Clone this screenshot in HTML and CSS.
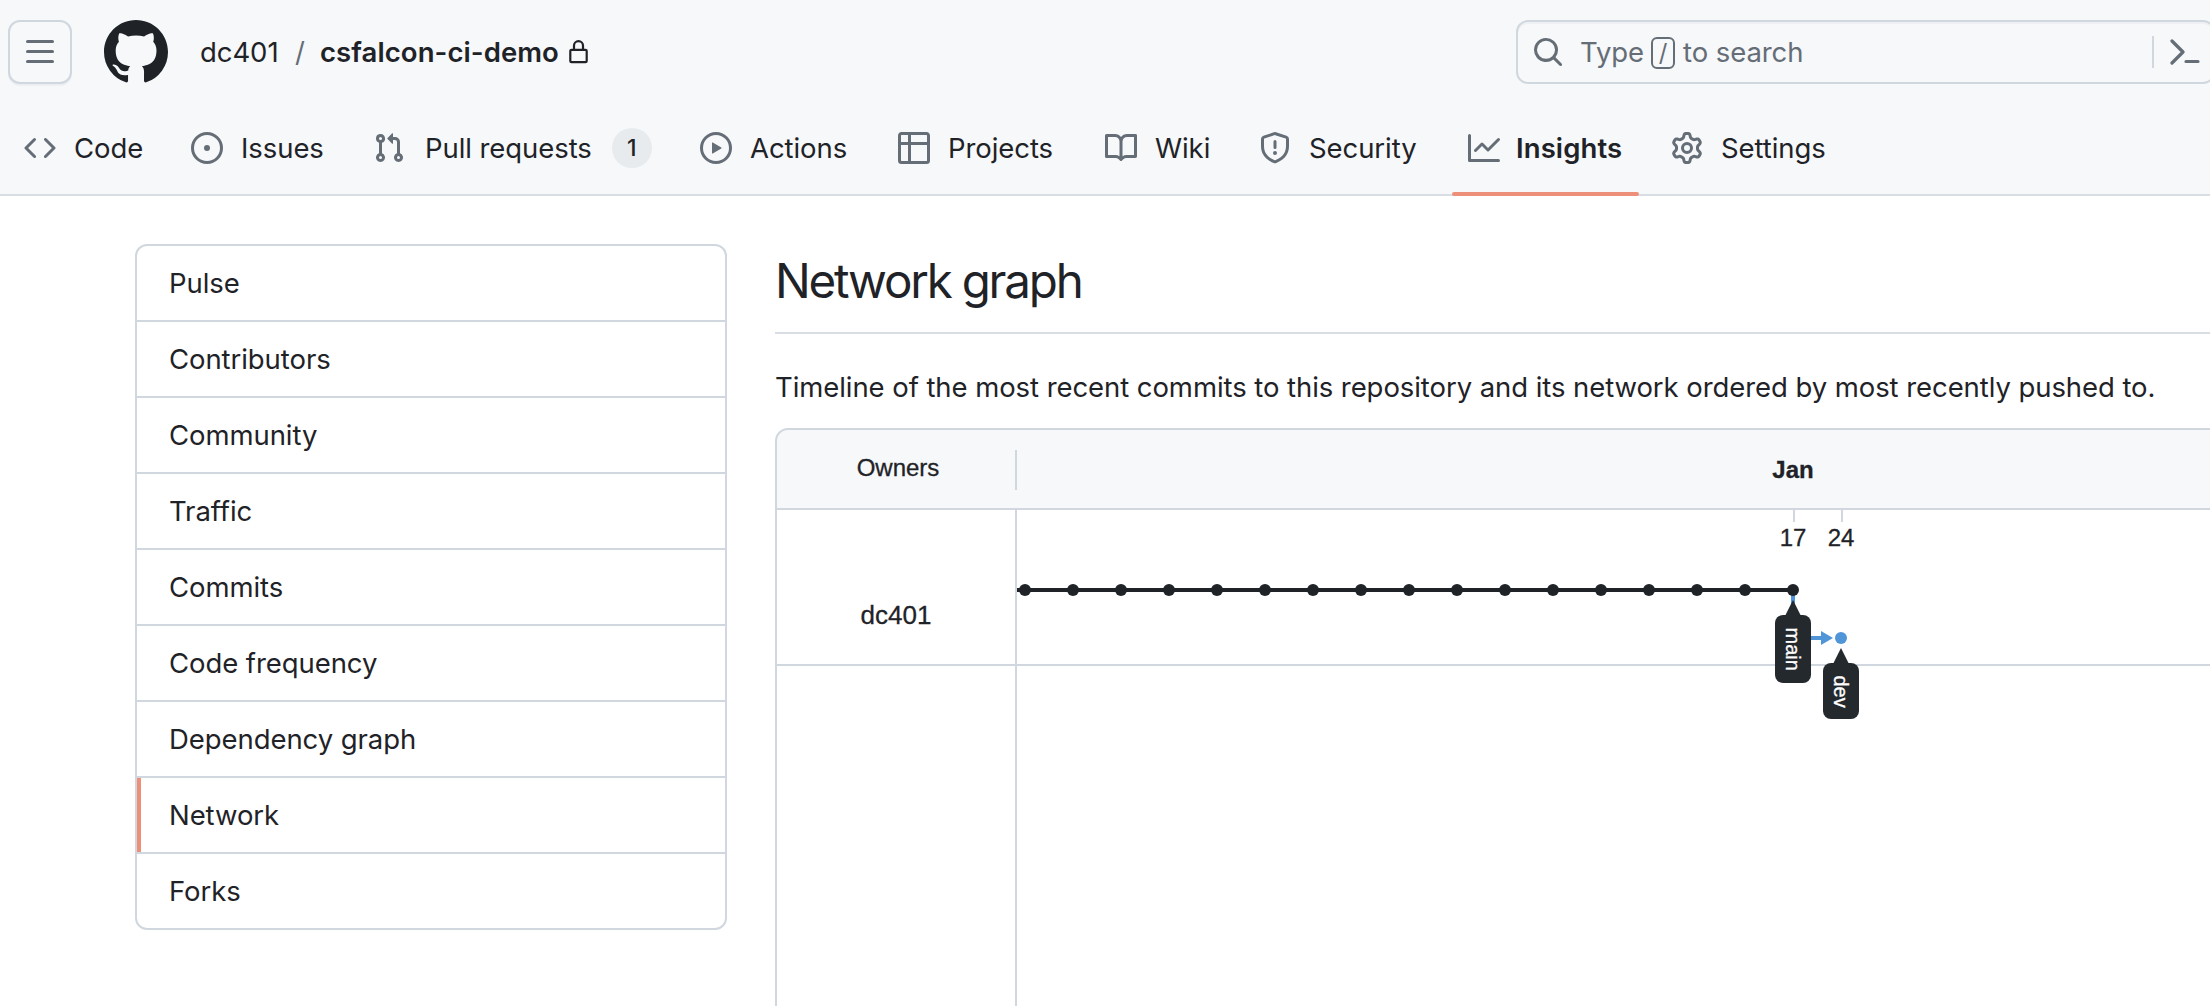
FILE: index.html
```
<!DOCTYPE html>
<html lang="en">
<head>
<meta charset="utf-8">
<title>Network graph · dc401/csfalcon-ci-demo</title>
<link rel="stylesheet" href="styles.css">
</head>
<body>
<header class="header">
  <div class="topbar">
    <button class="menu-button" aria-label="Menu"><svg class="icon" viewBox="0 0 16 16"><path d="M1 2.75A.75.75 0 0 1 1.75 2h12.5a.75.75 0 0 1 0 1.5H1.75A.75.75 0 0 1 1 2.75Zm0 5A.75.75 0 0 1 1.75 7h12.5a.75.75 0 0 1 0 1.5H1.75A.75.75 0 0 1 1 7.75ZM1.75 12h12.5a.75.75 0 0 1 0 1.5H1.75a.75.75 0 0 1 0-1.5Z"/></svg></button>
    <svg class="logo" viewBox="0 0 16 16"><path d="M8 0c4.42 0 8 3.58 8 8a8.013 8.013 0 0 1-5.45 7.59c-.4.08-.55-.17-.55-.38 0-.27.01-1.13.01-2.2 0-.75-.25-1.23-.54-1.48 1.78-.2 3.65-.88 3.65-3.95 0-.88-.31-1.59-.82-2.15.08-.2.36-1.02-.08-2.12 0 0-.67-.22-2.2.82-.64-.18-1.32-.27-2-.27-.68 0-1.36.09-2 .27-1.53-1.03-2.2-.82-2.2-.82-.44 1.1-.16 1.92-.08 2.12-.51.56-.82 1.28-.82 2.15 0 3.06 1.86 3.75 3.64 3.95-.23.2-.44.55-.51 1.07-.46.21-1.61.55-2.33-.66-.15-.24-.6-.83-1.23-.82-.67.01-.27.38.01.53.34.19.73.9.82 1.13.16.45.68 1.31 2.69.94 0 .67.01 1.3.01 1.49 0 .21-.15.45-.55.38A7.995 7.995 0 0 1 0 8c0-4.42 3.58-8 8-8Z"/></svg>
    <div class="crumbs">
      <span class="crumb-owner">dc401</span>
      <span class="crumb-slash">/</span>
      <span class="crumb-repo">csfalcon-ci-demo</span>
      <svg class="lock" viewBox="0 0 20 24"><rect x="1.3" y="9.8" width="16.4" height="12.4" rx="1.2"/><path d="M5 9.8V5.6a4.5 4.5 0 0 1 9 0v4.2"/></svg>
    </div>
    <div class="search">
      <svg class="icon" viewBox="0 0 16 16"><path d="M10.68 11.74a6 6 0 0 1-7.922-8.982 6 6 0 0 1 8.982 7.922l3.04 3.04a.749.749 0 0 1-.326 1.275.749.749 0 0 1-.734-.215ZM11.5 7a4.499 4.499 0 1 0-8.997 0A4.499 4.499 0 0 0 11.5 7Z"/></svg>
      <span class="search-type">Type</span><kbd class="search-key">/</kbd><span class="search-hint">to search</span>
      <span class="search-divider"></span>
      <svg class="terminal" viewBox="0 0 30 32"><path d="M2 5l11 11L2 27M16 25.500h12"/></svg>
    </div>
  </div>
  <nav class="tabs">
    <a class="tab"><svg class="icon" viewBox="0 0 16 16"><path d="m11.28 3.22 4.25 4.25a.75.75 0 0 1 0 1.06l-4.25 4.25a.749.749 0 0 1-1.275-.326.749.749 0 0 1 .215-.734L13.940 8l-3.720-3.720a.749.749 0 0 1 .326-1.275.749.749 0 0 1 .734.215Zm-6.560 0a.751.751 0 0 1 1.042.018.751.751 0 0 1 .018 1.042L2.060 8l3.720 3.720a.749.749 0 0 1-.326 1.275.749.749 0 0 1-.734-.215L.470 8.530a.750.750 0 0 1 0-1.060Z"/></svg><span>Code</span></a>
    <a class="tab"><svg class="icon" viewBox="0 0 16 16"><path d="M8 9.500a1.500 1.500 0 1 0 0-3 1.500 1.500 0 0 0 0 3Z"/><path d="M8 0a8 8 0 1 1 0 16A8 8 0 0 1 8 0ZM1.500 8a6.500 6.500 0 1 0 13 0 6.500 6.500 0 0 0-13 0Z"/></svg><span>Issues</span></a>
    <a class="tab tab-pulls"><svg class="icon" viewBox="0 0 16 16"><path d="M1.500 3.250a2.250 2.250 0 1 1 3 2.122v5.256a2.251 2.251 0 1 1-1.500 0V5.372A2.250 2.250 0 0 1 1.500 3.250Zm5.677-.177L9.573.677A.250.250 0 0 1 10 .854V2.500h1A2.500 2.500 0 0 1 13.500 5v5.628a2.251 2.251 0 1 1-1.500 0V5a1 1 0 0 0-1-1h-1v1.646a.250.250 0 0 1-.427.177L7.177 3.427a.250.250 0 0 1 0-.354ZM3.750 2.500a.750.750 0 1 0 0 1.500.750.750 0 0 0 0-1.500Zm0 9.500a.750.750 0 1 0 0 1.500.750.750 0 0 0 0-1.500Zm8.250.750a.750.750 0 1 0 1.500 0 .750.750 0 0 0-1.500 0Z"/></svg><span>Pull requests</span><span class="counter">1</span></a>
    <a class="tab"><svg class="icon" viewBox="0 0 16 16"><path d="M8 0a8 8 0 1 1 0 16A8 8 0 0 1 8 0ZM1.500 8a6.500 6.500 0 1 0 13 0 6.500 6.500 0 0 0-13 0Zm4.879-2.773 4.264 2.559a.250.250 0 0 1 0 .428l-4.264 2.559A.250.250 0 0 1 6 10.559V5.442a.250.250 0 0 1 .379-.215Z"/></svg><span>Actions</span></a>
    <a class="tab"><svg class="icon" viewBox="0 0 16 16"><path d="M0 1.750C0 .784.784 0 1.750 0h12.500C15.216 0 16 .784 16 1.750v12.500A1.750 1.750 0 0 1 14.250 16H1.750A1.750 1.750 0 0 1 0 14.250ZM6.500 6.500v8h7.750a.250.250 0 0 0 .250-.250V6.500Zm8-1.500V1.750a.250.250 0 0 0-.250-.250H6.500V5Zm-13 1.500v7.750c0 .138.112.250.250.250H5v-8ZM5 5V1.500H1.750a.250.250 0 0 0-.250.250V5Z"/></svg><span>Projects</span></a>
    <a class="tab"><svg class="icon" viewBox="0 0 16 16"><path d="M0 1.750A.750.750 0 0 1 .750 1h4.253c1.227 0 2.317.590 3 1.501A3.743 3.743 0 0 1 11.006 1h4.245a.750.750 0 0 1 .750.750v10.500a.750.750 0 0 1-.750.750h-4.507a2.250 2.250 0 0 0-1.591.659l-.622.621a.750.750 0 0 1-1.060 0l-.622-.621A2.250 2.250 0 0 0 5.258 13H.750a.750.750 0 0 1-.750-.750Zm7.251 10.324.004-5.073-.002-2.253A2.250 2.250 0 0 0 5.003 2.500H1.500v9h3.757a3.750 3.750 0 0 1 1.994.574ZM8.755 4.750l-.004 7.322a3.752 3.752 0 0 1 1.992-.572H14.500v-9h-3.495a2.250 2.250 0 0 0-2.250 2.250Z"/></svg><span>Wiki</span></a>
    <a class="tab"><svg class="icon" viewBox="0 0 16 16"><path d="M7.467.133a1.748 1.748 0 0 1 1.066 0l5.250 1.680A1.750 1.750 0 0 1 15 3.480V7c0 1.566-.320 3.182-1.303 4.682-.983 1.498-2.585 2.813-5.032 3.855a1.697 1.697 0 0 1-1.330 0c-2.447-1.042-4.049-2.357-5.032-3.855C1.320 10.182 1 8.566 1 7V3.480a1.755 1.755 0 0 1 1.217-1.667Zm.610 1.429a.250.250 0 0 0-.153 0l-5.250 1.680a.250.250 0 0 0-.174.238V7c0 1.358.275 2.666 1.057 3.860.784 1.194 2.121 2.340 4.366 3.297a.196.196 0 0 0 .154 0c2.245-.956 3.582-2.104 4.366-3.298C13.225 9.666 13.500 8.360 13.500 7V3.480a.251.251 0 0 0-.174-.237l-5.250-1.680ZM8.750 4.750v3a.750.750 0 0 1-1.500 0v-3a.750.750 0 0 1 1.500 0ZM9 10.500a1 1 0 1 1-2 0 1 1 0 0 1 2 0Z"/></svg><span>Security</span></a>
    <a class="tab tab-current"><svg class="icon" viewBox="0 0 16 16"><path d="M1.500 1.750V13.500h13.750a.750.750 0 0 1 0 1.500H.750a.750.750 0 0 1-.750-.750V1.750a.750.750 0 0 1 1.500 0Zm14.280 2.530-5.250 5.250a.750.750 0 0 1-1.060 0L7 7.060 4.280 9.780a.751.751 0 0 1-1.042-.018.751.751 0 0 1-.018-1.042l3.250-3.250a.750.750 0 0 1 1.060 0L10 7.940l4.720-4.720a.751.751 0 0 1 1.042.018.751.751 0 0 1 .018 1.042Z"/></svg><span>Insights</span></a>
    <a class="tab"><svg class="icon" viewBox="0 0 16 16"><path d="M8 0a8.200 8.200 0 0 1 .701.031C9.444.095 9.990.645 10.160 1.290l.288 1.107c.018.066.079.158.212.224.231.114.454.243.668.386.123.082.233.090.299.071l1.103-.303c.644-.176 1.392.021 1.820.630.270.385.506.792.704 1.218.315.675.111 1.422-.364 1.891l-.814.806c-.049.048-.098.147-.088.294.016.257.016.515 0 .772-.010.147.038.246.088.294l.814.806c.475.469.679 1.216.364 1.891a7.977 7.977 0 0 1-.704 1.217c-.428.610-1.176.807-1.820.630l-1.102-.302c-.067-.019-.177-.011-.300.071a5.909 5.909 0 0 1-.668.386c-.133.066-.194.158-.211.224l-.290 1.106c-.168.646-.715 1.196-1.458 1.260a8.006 8.006 0 0 1-1.402 0c-.743-.064-1.289-.614-1.458-1.260l-.289-1.106c-.018-.066-.079-.158-.212-.224a5.738 5.738 0 0 1-.668-.386c-.123-.082-.233-.090-.299-.071l-1.103.303c-.644.176-1.392-.021-1.820-.630a8.120 8.120 0 0 1-.704-1.218c-.315-.675-.111-1.422.363-1.891l.815-.806c.050-.048.098-.147.088-.294a6.214 6.214 0 0 1 0-.772c.010-.147-.038-.246-.088-.294l-.815-.806C.635 6.045.431 5.298.746 4.623a7.920 7.920 0 0 1 .704-1.217c.428-.610 1.176-.807 1.820-.630l1.102.302c.067.019.177.011.300-.071.214-.143.437-.272.668-.386.133-.066.194-.158.211-.224l.290-1.106C6.009.645 6.556.095 7.299.030 7.530.010 7.764 0 8 0Zm-.571 1.525c-.036.003-.108.036-.137.146l-.289 1.105c-.147.561-.549.967-.998 1.189-.173.086-.340.183-.500.290-.417.278-.970.423-1.529.270l-1.103-.303c-.109-.030-.175.016-.195.045-.220.312-.412.644-.573.990-.014.031-.021.110.059.190l.815.806c.411.406.562.957.530 1.456a4.709 4.709 0 0 0 0 .582c.032.499-.119 1.050-.530 1.456l-.815.806c-.081.080-.073.159-.059.190.162.346.353.677.573.989.020.030.085.076.195.046l1.102-.303c.560-.153 1.113-.008 1.530.270.161.107.328.204.501.290.447.222.850.629.997 1.189l.289 1.105c.029.109.101.143.137.146a6.600 6.600 0 0 0 1.142 0c.036-.003.108-.036.137-.146l.289-1.105c.147-.561.549-.967.998-1.189.173-.086.340-.183.500-.290.417-.278.970-.423 1.529-.270l1.103.303c.109.029.175-.016.195-.045.220-.313.411-.644.573-.990.014-.031.021-.110-.059-.190l-.815-.806c-.411-.406-.562-.957-.530-1.456a4.709 4.709 0 0 0 0-.582c-.032-.499.119-1.050.530-1.456l.815-.806c.081-.080.073-.159.059-.190a6.464 6.464 0 0 0-.573-.989c-.020-.030-.085-.076-.195-.046l-1.102.303c-.560.153-1.113.008-1.530-.270a4.440 4.440 0 0 0-.501-.290c-.447-.222-.850-.629-.997-1.189l-.289-1.105c-.029-.110-.101-.143-.137-.146a6.600 6.600 0 0 0-1.142 0ZM11 8a3 3 0 1 1-6 0 3 3 0 0 1 6 0ZM9.500 8a1.500 1.500 0 1 0-3.001.001A1.500 1.500 0 0 0 9.500 8Z"/></svg><span>Settings</span></a>
  </nav>
</header>
<div class="layout">
  <nav class="side-menu">
    <a class="side-item">Pulse</a>
    <a class="side-item">Contributors</a>
    <a class="side-item">Community</a>
    <a class="side-item">Traffic</a>
    <a class="side-item">Commits</a>
    <a class="side-item">Code frequency</a>
    <a class="side-item">Dependency graph</a>
    <a class="side-item side-item-current">Network</a>
    <a class="side-item">Forks</a>
  </nav>
  <main class="main">
    <h1 class="title">Network graph</h1>
    <p class="description">Timeline of the most recent commits to this repository and its network ordered by most recently pushed to.</p>
    <svg class="graph" width="1435" height="578" viewBox="775 428 1435 578">
      <path class="graph-head" d="M2220 429H788a12 12 0 0 0-12 12V509H2220Z"/>
      <path class="graph-rule" d="M776 500V1010M776 509H2220M776 665H2220M1016 450V490M1016 510V1010M1794 510V522M1842 510V522"/>
      <text class="graph-text" x="898" y="476" text-anchor="middle">Owners</text>
      <text class="graph-text graph-month" x="1793" y="478" text-anchor="middle">Jan</text>
      <text class="graph-text" x="1793" y="546" text-anchor="middle">17</text>
      <text class="graph-text" x="1841" y="546" text-anchor="middle">24</text>
      <text class="graph-text graph-owner" x="896" y="624" text-anchor="middle">dc401</text>
      <path class="branch-dev" d="M1793 590V638H1823"/>
      <path class="dev-fill" d="M1821 631l12 7-12 7Z"/>
      <circle class="dev-fill" cx="1841" cy="638" r="6"/>
      <path class="branch-main" d="M1017 590H1793"/>
      <g class="commits">
        <circle cx="1025" cy="590" r="6"/><circle cx="1073" cy="590" r="6"/><circle cx="1121" cy="590" r="6"/><circle cx="1169" cy="590" r="6"/><circle cx="1217" cy="590" r="6"/><circle cx="1265" cy="590" r="6"/><circle cx="1313" cy="590" r="6"/><circle cx="1361" cy="590" r="6"/><circle cx="1409" cy="590" r="6"/><circle cx="1457" cy="590" r="6"/><circle cx="1505" cy="590" r="6"/><circle cx="1553" cy="590" r="6"/><circle cx="1601" cy="590" r="6"/><circle cx="1649" cy="590" r="6"/><circle cx="1697" cy="590" r="6"/><circle cx="1745" cy="590" r="6"/><circle cx="1793" cy="590" r="6"/>
      </g>
      <g class="branch-tag">
        <rect x="1775" y="615" width="36" height="68" rx="8"/><path d="M1793 600l8 16h-16Z"/>
        <text transform="translate(1786 627.500) rotate(90)">main</text>
        <rect x="1823" y="663" width="36" height="56" rx="8"/><path d="M1841 648l8 16h-16Z"/>
        <text transform="translate(1834 675.500) rotate(90)">dev</text>
      </g>
    </svg>
  </main>
</div>
</body>
</html>
```
FILE: styles.css
```
* { box-sizing: border-box; }
body {
  margin: 0;
  height: 1006px;
  overflow: hidden;
  background: #fff;
  color: #1f2328;
  font-family: Inter, "Liberation Sans", sans-serif;
  font-size: 27.500px;
  letter-spacing: -.070px;
  line-height: 42px;
}
.icon { display: block; flex: none; width: 32px; height: 32px; fill: #656d76; }

.header {
  height: 196px;
  background: #f6f8fa;
  border-bottom: 2px solid #d8dee4;
}
.topbar { display: flex; align-items: center; height: 104px; padding-left: 8px; }
.menu-button {
  display: grid;
  flex: none;
  place-items: center;
  width: 64px;
  height: 64px;
  padding: 0;
  background: #f6f8fa;
  border: 2px solid #d0d7de;
  border-radius: 12px;
  box-shadow: 0 2px 0 rgba(31, 35, 40, .04);
}
.logo { flex: none; width: 64px; height: 64px; margin-left: 32px; fill: #1f2328; }
.crumbs { display: flex; flex: none; align-items: center; width: 1348px; padding-left: 32px; }
.crumb-owner { width: 95px; }
.crumb-slash { width: 25px; color: #656d76; }
.crumb-repo { width: 249px; font-weight: 600; letter-spacing: .080px; white-space: nowrap; }
.lock { width: 20px; height: 24px; fill: none; stroke: #1f2328; stroke-width: 2.200; }

.search {
  display: flex;
  flex: none;
  align-items: center;
  width: 699px;
  height: 64px;
  padding-left: 14px;
  border: 2px solid #d0d7de;
  border-radius: 12px;
  box-shadow: inset 0 2px 0 rgba(208, 215, 222, .2);
  color: #656d76;
}
.search-type { width: 70px; margin-left: 16px; }
.search-key {
  display: grid;
  place-items: center;
  width: 24px;
  height: 32px;
  margin: 2px 8px 0 1px;
  border: 2px solid #656d76;
  border-radius: 6px;
  font: 24px/24px Inter, sans-serif;
}
.search-divider { width: 2px; height: 32px; margin: 0 16px 0 auto; background: #d0d7de; }
.terminal { width: 30px; height: 32px; margin-right: 13px; fill: none; stroke: #656d76; stroke-width: 3.200; stroke-linecap: round; stroke-linejoin: round; }

.tabs {
  display: grid;
  grid-template-columns: 167px 181px 328px 198px 207px 154px 209px 203px 190px;
  height: 92px;
  padding-left: 8px;
}
.tab {
  position: relative;
  display: flex;
  align-items: center;
  gap: 18px;
  height: 88px;
  padding-left: 16px;
  white-space: nowrap;
}
.tab-pulls { gap: 20px; padding-left: 17px; }
.counter {
  width: 40px;
  height: 40px;
  border-radius: 20px;
  background: #e7ebee;
  font-size: 23px;
  font-weight: 500;
  line-height: 40px;
  text-align: center;
}
.tab-current { gap: 16px; font-weight: 600; letter-spacing: .1px; }
.tab-current::after {
  content: "";
  position: absolute;
  left: 0;
  bottom: -4px;
  width: 187px;
  height: 4px;
  border-radius: 2px;
  background: #ee8f7a;
}

.layout { display: flex; gap: 48px; padding: 48px 0 0 135px; }
.side-menu {
  flex: none;
  width: 592px;
  height: 686px;
  border: 2px solid #d0d7de;
  border-radius: 12px;
  overflow: hidden;
}
.side-item {
  display: flex;
  align-items: center;
  height: 76px;
  padding-left: 32px;
  border-bottom: 2px solid #d0d7de;
}
.side-item:last-child { border-bottom: 0; height: 74px; }
.side-item-current { box-shadow: inset 4px 0 0 #ee8f7a; }

.main { width: 1435px; }
.title {
  height: 90px;
  margin: 0;
  padding-top: 1px;
  border-bottom: 2px solid #d8dee4;
  font-size: 47.500px;
  font-weight: 400;
  letter-spacing: -2.200px;
  line-height: 72px;
}
.description { margin: 32px 0 20px; white-space: nowrap; }
.graph { display: block; }
.graph-head { fill: #f6f8fa; stroke: #d0d7de; stroke-width: 2; }
.graph-rule { fill: none; stroke: #d0d7de; stroke-width: 2; }
.graph-text { font: 24px "Liberation Sans", sans-serif; letter-spacing: 0; fill: #1f2328; stroke: #1f2328; stroke-width: .3; }
.graph-month { font-weight: 700; }
.graph-owner { font-size: 26px; }
.branch-dev { fill: none; stroke: #4f95d8; stroke-width: 4; }
.dev-fill { fill: #4f95d8; }
.branch-main { stroke: #1f2328; stroke-width: 4; }
.commits { fill: #1f2328; }
.branch-tag { fill: #24292e; }
.branch-tag text { font: 20px "Liberation Sans", sans-serif; letter-spacing: 0; fill: #fff; stroke: #fff; stroke-width: .3; }
```
